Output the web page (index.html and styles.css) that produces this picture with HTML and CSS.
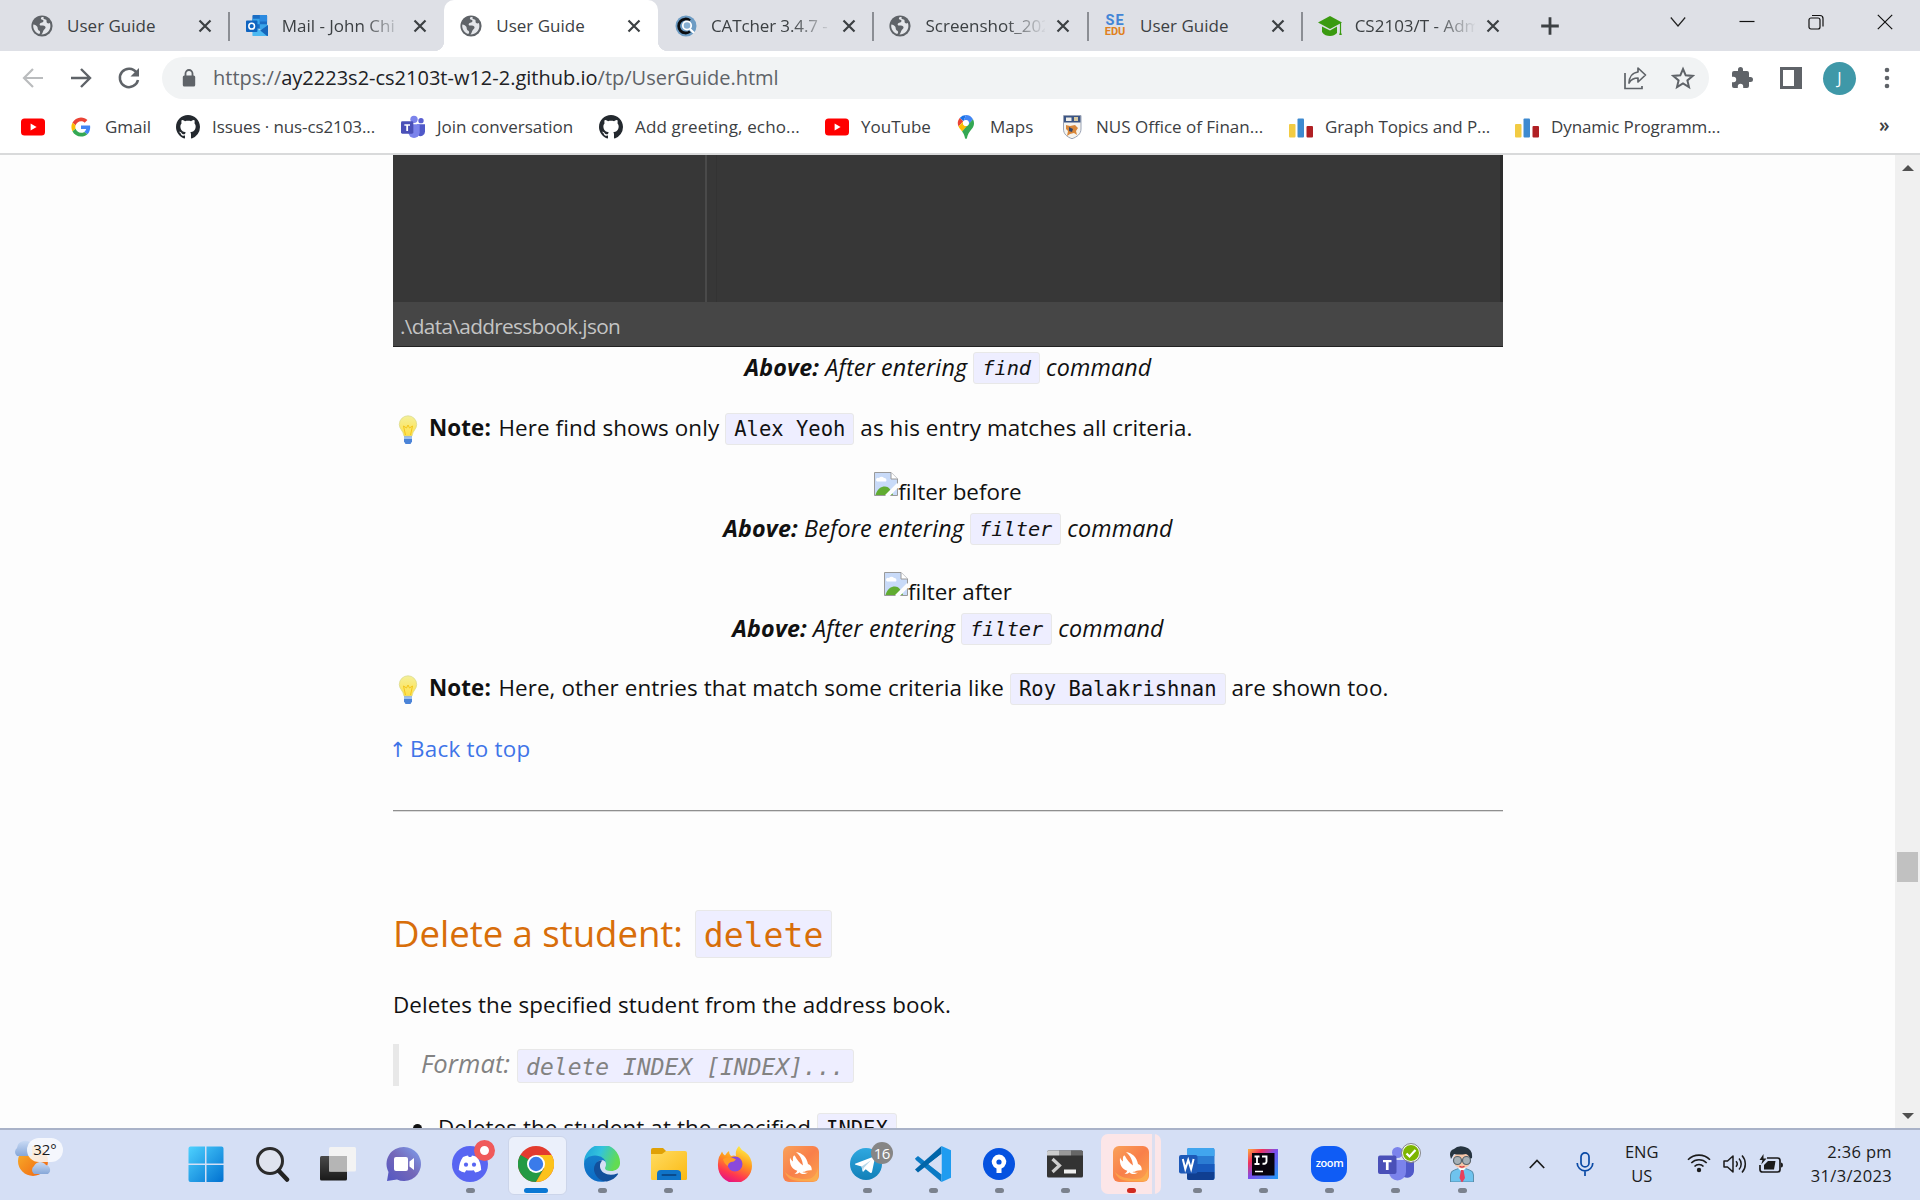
FILE: index.html
```html
<!DOCTYPE html>
<html lang="en">
<head>
<meta charset="utf-8">
<title>User Guide</title>
<link rel="stylesheet" href="styles.css">
</head>
<body>
<svg class="defs" width="0" height="0">
  <defs>
    <linearGradient id="gWin" gradientUnits="userSpaceOnUse" x1="0" y1="0" x2="36" y2="36"><stop offset="0" stop-color="#4fd3ff"/><stop offset="1" stop-color="#0070d0"/></linearGradient>
    <linearGradient id="gDark" x1="0" y1="0" x2="0" y2="1"><stop offset="0" stop-color="#4a4a4a"/><stop offset="1" stop-color="#191919"/></linearGradient>
    <linearGradient id="gChat" x1="0" y1="1" x2="1" y2="0"><stop offset="0" stop-color="#5256c4"/><stop offset=".5" stop-color="#7467b8"/><stop offset="1" stop-color="#7fa2f0"/></linearGradient>
    <linearGradient id="gEdge" x1="0" y1="0" x2="1" y2=".3"><stop offset="0" stop-color="#1c9fdc"/><stop offset=".5" stop-color="#33c3dc"/><stop offset="1" stop-color="#62dc52"/></linearGradient>
    <linearGradient id="gEdge2" x1="0" y1="0" x2="0" y2="1"><stop offset="0" stop-color="#1580cc"/><stop offset="1" stop-color="#0c6ac4"/></linearGradient>
    <linearGradient id="gFold" x1="0" y1="0" x2="1" y2="1"><stop offset="0" stop-color="#ffdc62"/><stop offset="1" stop-color="#fbb912"/></linearGradient>
    <linearGradient id="gFox" x1=".7" y1="0" x2=".3" y2="1"><stop offset="0" stop-color="#fff04a"/><stop offset=".4" stop-color="#ff9a1c"/><stop offset=".75" stop-color="#ff3750"/><stop offset="1" stop-color="#e0108a"/></linearGradient>
    <linearGradient id="gSwift" x1="0" y1="0" x2="1" y2="1"><stop offset="0" stop-color="#f9a25a"/><stop offset=".5" stop-color="#f97f4a"/><stop offset="1" stop-color="#fba34f"/></linearGradient>
    <linearGradient id="gTele" x1="0" y1="0" x2="0" y2="1"><stop offset="0" stop-color="#2fa8e0"/><stop offset="1" stop-color="#1280b8"/></linearGradient>
    <linearGradient id="gSun" x1="0" y1="0" x2="1" y2="1"><stop offset="0" stop-color="#f8b52c"/><stop offset="1" stop-color="#f06010"/></linearGradient>
    <linearGradient id="gCloud" x1="0" y1="0" x2="0" y2="1"><stop offset="0" stop-color="#c9daf4"/><stop offset="1" stop-color="#86a7d8"/></linearGradient>
    <linearGradient id="gIJ" x1="0" y1="0" x2="1" y2="1"><stop offset="0" stop-color="#ffb13b"/><stop offset=".25" stop-color="#f0315c"/><stop offset=".5" stop-color="#7a4ff0"/><stop offset="1" stop-color="#1e9cf5"/></linearGradient>
    <linearGradient id="gBulb" x1="0" y1="0" x2="0" y2="1"><stop offset="0" stop-color="#f4f09a"/><stop offset="1" stop-color="#ffe04a"/></linearGradient>
    <symbol id="globe" viewBox="0 0 22 22"><circle cx="11" cy="11" r="10.600" fill="#5f6368"/><path d="M10.500 2.200c-1.200 1-.4 2.400.8 2.500 1.200.2 1.600 1.200.7 2.200-1 1-2.800.6-3.300 2-.3 1 .5 1.600 1.800 1.600 2 0 3.600.2 4 1.600.4 1.500-1.200 2.200-1.900 3.200-.7 1.200-.8 3-2.200 4.100 4.700.3 9-3.700 9-8.400 0-1-.2-2-.5-2.900-.9.600-2.300.5-3-.3-.7-.9.100-2-.7-3-.8-.8-2.200-.2-2.700-1.300-.2-.5 0-1 .3-1.500-.8-.2-1.600-.1-2.300.2zM2.300 9.500c1.800.2 3.300 1 4 2.300.6 1.100.3 2.300 1 3.200.6.700 1.700.8 1.800 2 .1.700-.3 1.400-.8 1.900C4.600 17.900 1.600 14 2.300 9.500z" fill="#e4e6ea"/></symbol>
    <symbol id="close" viewBox="0 0 14 14"><path d="M1.500 1.500l11 11M12.500 1.500l-11 11" stroke="#3c4043" stroke-width="2.200"/></symbol>
    <symbol id="github" viewBox="0 0 16 16"><path fill="#24292f" d="M8 0C3.580 0 0 3.580 0 8c0 3.540 2.290 6.530 5.470 7.590.4.070.55-.17.55-.38 0-.19-.01-.82-.01-1.490-2.010.37-2.530-.49-2.690-.94-.09-.23-.48-.94-.82-1.130-.28-.15-.68-.52-.01-.53.63-.01 1.080.58 1.230.82.72 1.210 1.870.87 2.330.66.07-.52.28-.87.51-1.070-1.780-.2-3.640-.89-3.640-3.950 0-.87.31-1.590.82-2.150-.08-.2-.36-1.020.08-2.120 0 0 .67-.21 2.200.82.64-.18 1.320-.27 2-.27s1.360.09 2 .27c1.530-1.040 2.200-.82 2.200-.82.44 1.100.16 1.920.08 2.120.51.56.82 1.270.82 2.150 0 3.070-1.870 3.750-3.650 3.950.29.25.54.73.54 1.480 0 1.070-.01 1.930-.01 2.200 0 .21.15.46.55.38A8.010 8.010 0 0 0 16 8c0-4.420-3.580-8-8-8z"/></symbol>
    <symbol id="youtube" viewBox="0 0 24 24"><rect x="0" y="3.500" width="24" height="17" rx="3.500" fill="#f00"/><path d="M9.600 8.500v7l6-3.500z" fill="#fff"/></symbol>
    <symbol id="bars" viewBox="0 0 24 24"><rect x="0" y="9" width="6.500" height="13.500" rx="1" fill="#f2cb43"/><rect x="8.500" y="3.500" width="6.500" height="19" rx="1" fill="#3e8ad0"/><rect x="17.500" y="11" width="6.500" height="11.500" rx="1" fill="#b02024"/></symbol>
    <symbol id="teams" viewBox="0 0 36 36"><circle cx="30" cy="8.500" r="4" fill="#5a5fd0"/><circle cx="19.500" cy="6.500" r="5.500" fill="#7b83eb"/><path d="M24 14h12v11a7 7 0 0 1-10 6z" fill="#5059c9"/><path d="M11 14h17v12a8.500 8.500 0 0 1-17 0z" fill="#7b83eb"/><rect x="0" y="9.500" width="18.500" height="18.500" rx="2" fill="#4a50b8"/><path d="M5 14h8.500v2.300h-2.900V24H7.900v-7.700H5z" fill="#fff"/></symbol>
    <symbol id="broken" viewBox="0 0 24 24"><path d="M.5.500h16.500l6.500 6.500v16.500H.5z" fill="#c8daf8" stroke="#9a9a9a"/><path d="M17 .5v6.500h6.500" fill="#fff" stroke="#9a9a9a"/><path d="M3 9.500a2 2 0 0 1 2-3.500 3 3 0 0 1 5 0A2.200 2.200 0 0 1 12 9.500z" fill="#fff"/><path d="M1.500 23C3 17 7 14.500 11 14.500c3.500 0 6 3 8 8.500z" fill="#61ac32"/><path d="M12.500 24.500l12-12" stroke="#fdfdfd" stroke-width="4"/></symbol>
    <symbol id="bulb" viewBox="0 0 20 30"><path d="M10 .8a8.600 8.600 0 0 0-8.700 8.700c0 4.500 3.900 6 4.700 11.500h8c.8-5.500 4.700-7 4.700-11.500A8.600 8.600 0 0 0 10 .8z" fill="url(#gBulb)" stroke="#d8d888" stroke-width=".7"/><path d="M7.500 20L5.500 11l3 2 1.500-3 1.500 3 3-2-2 9" fill="none" stroke="#f3c51c" stroke-width="1"/><path d="M6 21.500h8v5L12.500 29h-5L6 26.500z" fill="#4b84d8"/><path d="M6 22h8v2H6z" fill="#9dc0f0"/></symbol>
    <symbol id="swift" viewBox="0 0 36 36"><rect width="36" height="36" rx="6" fill="url(#gSwift)"/><path d="M2 26C4 33 10 35 18 35h12q5 0 5-5v-8c-2 8-6 11-12 11C14 33 7 31 2 26z" fill="#fcb84f" opacity=".6"/><path d="M13 6c6 .8 11 5.500 12 12 3 1 4 3.500 3.700 6.200-2-.2-3.700 0-5 .6-2 1-3 1.200-4.700 1.100 2 .9 4 .9 6 .5-4 2.600-7 1.600-8.800-.2-.8 1.300-2 1.800-4.700 1.300 1.800-.7 2.500-1.500 2.700-2.700C9 23.300 6.200 18.500 7 11.500c1 2.200 1.800 3 3 4C9.600 11.500 10.300 8.500 12 10c2 4 4.500 7 8 9.500C19.500 14.500 17.500 9.500 13 6z" fill="#fff"/></symbol>
  </defs>
</svg>

<header class="chrome">
  <div class="tabs">
    <div class="tab"><svg class="fav"><use href="#globe"/></svg><span class="title">User Guide</span><svg class="x"><use href="#close"/></svg></div>
    <div class="tab sep"><svg class="fav" viewBox="0 0 24 24"><rect x="7" y="0" width="16" height="15" rx="1" fill="#1a6dc4"/><path d="M7 4h8v6H7zM15 10h8v6h-8z" fill="#3aa5ea"/><path d="M15 0h7q1 0 1 1v6h-8z" fill="#2b8ae0"/><path d="M7 11l8.500 6L24 11v11q0 1-1 1H8q-1 0-1-1z" fill="#4cb9f2"/><path d="M24 11v11q0 1-1 1L15.500 17z" fill="#1666bb"/><rect y="6" width="12.500" height="12.500" rx="1" fill="#0f64c0"/><circle cx="6.200" cy="12.200" r="3.100" fill="none" stroke="#fff" stroke-width="1.700"/></svg><span class="title fade">Mail - John Chi</span><svg class="x"><use href="#close"/></svg></div>
    <div class="tab active"><svg class="fav"><use href="#globe"/></svg><span class="title">User Guide</span><svg class="x"><use href="#close"/></svg></div>
    <div class="tab"><svg class="fav" viewBox="0 0 22 22"><circle cx="11" cy="11" r="10.500" fill="#6d9cc4"/><path d="M15 5.500A7 7 0 1 0 15 16.500" fill="none" stroke="#0b0d10" stroke-width="2.800"/><circle cx="12" cy="10.500" r="4.200" fill="#86aed0" stroke="#fff" stroke-width="1.800"/><path d="M15 14l4 4" stroke="#fff" stroke-width="2.200"/></svg><span class="title fade tight">CATcher 3.4.7 -</span><svg class="x"><use href="#close"/></svg></div>
    <div class="tab sep"><svg class="fav"><use href="#globe"/></svg><span class="title fade">Screenshot_202</span><svg class="x"><use href="#close"/></svg></div>
    <div class="tab sep"><span class="fav seedu"><b>SE</b><i>EDU</i></span><span class="title">User Guide</span><svg class="x"><use href="#close"/></svg></div>
    <div class="tab sep"><svg class="fav" viewBox="0 0 24 22"><path d="M12 1L0 7.500 12 14l12-6.500z" fill="#3a9a10"/><path d="M4 11.500V17c2 3 5 4 8 4s5-1 7-3v-6.500l-7 4z" fill="#3a9a10"/><path d="M22.500 8v9" stroke="#3a9a10" stroke-width="1.200"/><path d="M22.500 15l1.300 5h-2.600z" fill="#3a9a10"/></svg><span class="title fade">CS2103/T - Adm</span><svg class="x"><use href="#close"/></svg></div>
    <div class="newtab"><svg width="20" height="20" viewBox="0 0 20 20"><path d="M10 1.200v17.600M1.200 10h17.600" stroke="#3c4043" stroke-width="2.800"/></svg></div>
    <div class="winctl">
      <svg viewBox="0 0 16 16"><path d="M.8 3.500L8 12l7.200-8.500" fill="none" stroke="#222" stroke-width="1.200"/></svg>
      <svg viewBox="0 0 16 16"><path d="M.5 7.500h15" stroke="#111" stroke-width="1.200"/></svg>
      <svg viewBox="0 0 16 16"><rect x="1" y="4" width="11" height="11" rx="2" fill="none" stroke="#111" stroke-width="1.200"/><path d="M4 1.500h8q3 0 3 3v8" fill="none" stroke="#111" stroke-width="1.200"/></svg>
      <svg viewBox="0 0 16 16"><path d="M.8.800l14.400 14.400M15.200.800L.8 15.200" stroke="#111" stroke-width="1.200"/></svg>
    </div>
  </div>
  <div class="toolbar">
    <svg class="nav" viewBox="0 0 24 24"><path d="M22 12H4M12 3l-9 9 9 9" fill="none" stroke="#babcbe" stroke-width="2.200"/></svg>
    <svg class="nav" viewBox="0 0 24 24"><path d="M2 12h18M12 3l9 9-9 9" fill="none" stroke="#5f6368" stroke-width="2.400"/></svg>
    <svg class="nav" viewBox="0 0 24 24"><path d="M19.500 6.500A9.200 9.200 0 1 0 21 14" fill="none" stroke="#5f6368" stroke-width="2.500"/><path d="M22 2v8.500h-8.500z" fill="#5f6368"/></svg>
    <div class="omnibox">
      <svg width="14" height="18" viewBox="0 0 14 18"><rect x=".8" y="6.500" width="12.400" height="11" rx="1.500" fill="#5f6368"/><path d="M3.500 7V4.500a3.500 3.500 0 0 1 7 0V7" fill="none" stroke="#5f6368" stroke-width="1.800"/></svg>
      <span class="url">https://<b>ay2223s2-cs2103t-w12-2.github.io</b>/tp/UserGuide.html</span>
      <svg class="share" viewBox="0 0 24 24"><path d="M2 7v15.500h17V20" fill="none" stroke="#5f6368" stroke-width="1.700"/><path d="M15 2l7.500 7-7.500 7v-4c-4 0-7 1.500-9 5 .3-6 3.500-10.500 9-11z" fill="none" stroke="#5f6368" stroke-width="1.700" stroke-linejoin="round"/></svg>
      <svg class="star" viewBox="0 0 24 24"><path d="M12 3l2.700 6.300 6.900.6-5.200 4.500 1.600 6.700-6-3.600-6 3.600 1.600-6.700L2.400 9.900l6.900-.6z" fill="none" stroke="#5f6368" stroke-width="2"/></svg>
    </div>
    <svg class="tool ext" viewBox="0 0 24 24"><path d="M20.500 11H19V7a2 2 0 0 0-2-2h-4V3.500a2.500 2.500 0 0 0-5 0V5H4a2 2 0 0 0-2 2v3.800h1.500a2.700 2.700 0 0 1 0 5.400H2V20a2 2 0 0 0 2 2h3.800v-1.500a2.700 2.700 0 0 1 5.400 0V22H17a2 2 0 0 0 2-2v-4h1.500a2.500 2.500 0 0 0 0-5z" fill="#5f6368"/></svg>
    <svg class="tool side" viewBox="0 0 22 22"><path d="M0 0h22v22H0zM3 3v16h11V3z" fill="#5f6368" fill-rule="evenodd"/></svg>
    <div class="avatar">J</div>
    <svg class="tool dots" viewBox="0 0 6 22"><circle cx="3" cy="3" r="2.300" fill="#5f6368"/><circle cx="3" cy="11" r="2.300" fill="#5f6368"/><circle cx="3" cy="19" r="2.300" fill="#5f6368"/></svg>
  </div>
  <div class="bookmarks">
    <div class="bm"><svg><use href="#youtube"/></svg></div>
    <div class="bm"><svg viewBox="-6 -6 60 60"><path fill="#EA4335" d="M24 9.500c3.540 0 6.710 1.220 9.210 3.600l6.850-6.850C35.900 2.380 30.470 0 24 0 14.620 0 6.510 5.380 2.560 13.220l7.980 6.190C12.430 13.720 17.740 9.500 24 9.500z"/><path fill="#4285F4" d="M46.980 24.550c0-1.570-.15-3.090-.38-4.550H24v9.020h12.940c-.58 2.960-2.260 5.480-4.780 7.180l7.730 6c4.510-4.180 7.090-10.360 7.090-17.650z"/><path fill="#FBBC05" d="M10.530 28.590A14.500 14.500 0 0 1 9.770 24c0-1.600.27-3.140.76-4.590l-7.980-6.190A23.900 23.900 0 0 0 0 24c0 3.880.92 7.540 2.560 10.780z"/><path fill="#34A853" d="M24 48c6.480 0 11.930-2.130 15.890-5.810l-7.730-6c-2.150 1.450-4.920 2.300-8.160 2.300-6.260 0-11.570-4.220-13.470-9.910l-7.980 6.190C6.510 42.620 14.620 48 24 48z"/></svg><span>Gmail</span></div>
    <div class="bm"><svg><use href="#github"/></svg><span class="tight">Issues · nus-cs2103...</span></div>
    <div class="bm"><svg><use href="#teams"/></svg><span>Join conversation</span></div>
    <div class="bm"><svg><use href="#github"/></svg><span class="loose">Add greeting, echo...</span></div>
    <div class="bm"><svg><use href="#youtube"/></svg><span>YouTube</span></div>
    <div class="bm"><svg viewBox="0 0 24 24"><path d="M12 0a8.200 8.200 0 0 0-6.300 3L9.500 6.200z" fill="#1a73e8"/><path d="M5.700 3A8.200 8.200 0 0 0 4.500 11.500L9.300 6.200z" fill="#ea4335"/><path d="M12 0a8.200 8.200 0 0 1 7 4.200L14.500 9.800A3.200 3.200 0 0 0 9.600 6z" fill="#4285f4"/><path d="M4.500 11.500c.8 1.700 2.200 3 3.600 5L14.500 10A3.200 3.200 0 0 1 9.300 6.400z" fill="#fbbc04"/><path d="M19 4.200c2 4 .8 7.300-1.500 10C15 17.300 13.500 19.500 13 23q-1 2-2 0c-.5-2.500-1.400-4.500-2.900-6.500z" fill="#34a853"/><circle cx="12" cy="8" r="2.900" fill="#fff"/></svg><span>Maps</span></div>
    <div class="bm"><svg viewBox="0 0 24 24"><path d="M3.500.500h17.500V14c0 5-4 8-9 9.700C7 22 3.500 19 3.500 14z" fill="#f6f4ee" stroke="#9aa3b5"/><path d="M4 1h16.500v6.500H4z" fill="#3b5584"/><path d="M6 2.500h5.500v3.500H6z" fill="#f0eee8"/><path d="M14 2h4v4h-4z" fill="#d8c9a0"/><path d="M6 10l4 1 5-1 3 3-2 3 1 4-3-2-4 1-3 2 1-5-2-2z" fill="#d8873a"/><path d="M9 12l4 2-1 3-3-1z" fill="#33466b"/></svg><span>NUS Office of Finan...</span></div>
    <div class="bm"><svg><use href="#bars"/></svg><span class="tight">Graph Topics and P...</span></div>
    <div class="bm"><svg><use href="#bars"/></svg><span class="tight">Dynamic Programm...</span></div>
    <div class="more">»</div>
  </div>
</header>

<div class="view">
  <main class="page">
    <div class="shot"><div class="panes"><div class="left"></div><div class="right"></div></div><div class="status">.\data\addressbook.json</div></div>
    <p class="cap c1"><span><b>Above:</b> After entering</span> <code>find</code> <span>command</span></p>
    <p class="note"><svg class="bulb"><use href="#bulb"/></svg><b>Note:</b> <span>Here find shows only</span> <code>Alex Yeoh</code> <span>as his entry matches all criteria.</span></p>
    <p class="alt"><svg class="broken"><use href="#broken"/></svg><span>filter before</span></p>
    <p class="cap"><span><b>Above:</b> Before entering</span> <code>filter</code> <span>command</span></p>
    <p class="alt"><svg class="broken"><use href="#broken"/></svg><span>filter after</span></p>
    <p class="cap"><span><b>Above:</b> After entering</span> <code>filter</code> <span>command</span></p>
    <p class="note"><svg class="bulb"><use href="#bulb"/></svg><b>Note:</b> <span>Here, other entries that match some criteria like</span> <code>Roy Balakrishnan</code> <span>are shown too.</span></p>
    <p class="back"><a><span class="arrow">↑</span> Back to top</a></p>
    <hr>
    <h2><span>Delete a student:</span> <code>delete</code></h2>
    <p class="desc">Deletes the specified student from the address book.</p>
    <blockquote><span>Format:</span> <code>delete INDEX [INDEX]...</code></blockquote>
    <ul><li><span>Deletes the student at the specified</span> <code>INDEX</code></li></ul>
  </main>
  <div class="scroll"><svg viewBox="0 0 12 6"><path d="M0 6l6-6 6 6z" fill="#505050"/></svg><div class="thumb"></div><svg viewBox="0 0 12 6"><path d="M0 0l6 6 6-6z" fill="#505050"/></svg></div>
</div>

<footer class="taskbar">
  <div class="weather">
    <svg width="40" height="42" viewBox="0 0 40 42"><circle cx="18" cy="26" r="15" fill="url(#gSun)"/><path d="M2 21a5 5 0 0 1 0-8 8 8 0 0 1 15-3v11z" fill="url(#gCloud)"/><path d="M19 39a5 5 0 0 1 0-8 7 7 0 0 1 12-1 5 5 0 0 1 2 9z" fill="url(#gCloud)"/></svg>
    <span class="temp">32°</span>
  </div>
  <div class="apps">
    <div class="app"><svg viewBox="0 0 36 36"><path d="M.5 2.500q0-2 2-2H17v17H.5zM18.500.500h15q2 0 2 2v15h-17zM.5 19H17v17H2.500q-2 0-2-2zM18.500 19h17v15q0 2-2 2h-15z" fill="url(#gWin)"/></svg></div>
    <div class="app"><svg viewBox="0 0 36 36"><circle cx="16" cy="15" r="12.500" fill="#dfe3ee" stroke="#2b2b2b" stroke-width="3"/><path d="M25 25l8 8.500" stroke="#222" stroke-width="4.500" stroke-linecap="round"/></svg></div>
    <div class="app"><svg viewBox="0 0 36 36"><rect x="0" y="10" width="27" height="24.500" rx="1.500" fill="url(#gDark)"/><rect x="9" y="1" width="27" height="24.500" rx="1.500" fill="#f3f3f3"/><rect x="9" y="10" width="18" height="15.500" fill="#b5b5b5"/></svg></div>
    <div class="app"><svg viewBox="0 0 36 36"><path d="M18 1a17 17 0 1 1-7 32.500L1 35l1.500-9A17 17 0 0 1 18 1z" fill="url(#gChat)"/><rect x="8" y="11" width="14" height="14" rx="2" fill="#fff"/><path d="M23.500 15.500l4.500-3.500v12l-4.500-3.500z" fill="#fff"/></svg></div>
    <div class="app run"><svg viewBox="0 0 36 36"><circle cx="18" cy="18" r="18" fill="#5865f2"/><path d="M11 11q3-1.300 5-1.500l.8 1.500h2.400l.8-1.500q2 .2 5 1.500 4 5.500 4.200 13-3 2.300-6 2.500l-1.400-2.300q-3.800.7-7.600 0L12.800 26.500q-3-.2-6-2.500Q7 16.500 11 11z" fill="#fff"/><circle cx="14" cy="18.700" r="2.100" fill="#5865f2"/><circle cx="22" cy="18.700" r="2.100" fill="#5865f2"/></svg><span class="badge rec"></span></div>
    <div class="app run focus"><svg viewBox="0 0 36 36"><circle cx="18" cy="18" r="18" fill="#e33b2e"/><path d="M2.400 9A18 18 0 0 0 18 36l8-14-8-4z" fill="#249a45"/><path d="M2.400 9l8.200 13.500L18 18z" fill="#249a45"/><path d="M18 36A18 18 0 0 0 33.600 9H18l8 13.500z" fill="#fcc21b"/><circle cx="18" cy="18" r="9" fill="#fff"/><circle cx="18" cy="18" r="7.200" fill="#3a7bea"/></svg></div>
    <div class="app run"><svg viewBox="0 0 36 36"><path d="M0 17A18 18 0 0 1 36 16c.5 6-4 9-9 9-4 0-6-1.200-6-2.800 0-1.200 1-1.400 1-4.200 0-4-4-7-9-7C6 11 1 14 0 17z" fill="url(#gEdge)"/><path d="M0 18c0-5 5-8.500 11-8.500 6 0 11 3.500 11 8.500 0-3-3-4.500-5-4-4 1-6 5-5 10 1 6 6 9 9 11.500C9 37.500 0 29 0 18z" fill="url(#gEdge2)"/><path d="M16 14.200c-5 2-7 7-5.500 12 2 6 8 9.800 12.500 9.200 5-1 9-4 11-7.200.3-.6-.2-1-.8-.7C26 30.500 17 28 16 21c-.3-3 1-5.500 2.500-6.500z" fill="#12509c"/></svg></div>
    <div class="app run"><svg viewBox="0 0 36 36"><path d="M0 4q0-2 2-2h10l4 4-4 5H0z" fill="#e0a106"/><path d="M0 8h11l4-3h19q2 0 2 2v25.500q0 1.500-1.500 1.500h-33Q0 34 0 32.500z" fill="url(#gFold)"/><path d="M6 34v-6q0-4 4-4h16q4 0 4 4v6z" fill="#0f74c8"/><path d="M11.500 29h13" stroke="#0a4b8c" stroke-width="2" stroke-linecap="round"/></svg></div>
    <div class="app"><svg viewBox="0 0 36 36"><path d="M2 11Q4 8 5 5.500q1 3 3 4Q10 6 12 5q0 3 2 5 3-1 5 0-1-6 3-10 2 4 6 6 7 5 7 14A17 17 0 0 1 1 20q-.3-5 1-9z" fill="url(#gFox)"/><circle cx="18" cy="18" r="7.500" fill="#8a49dc"/><path d="M6 13q5-3 10-1l3 1.500q-2 2.500-5 2.500-3 1-3 4-4-2-5-7z" fill="#ff9c26"/></svg></div>
    <div class="app"><svg><use href="#swift"/></svg></div>
    <div class="app run"><svg viewBox="0 0 36 36"><circle cx="17" cy="18" r="16" fill="url(#gTele)"/><path d="M6 17.800L25 10.500q1.200-.3 1 1L23 26q-.4 1.500-1.800.7l-4.500-3.400-2.200 2.200q-.8.700-1-.5l-1-4.500-6-1.700q-1-.4-.5-1z" fill="#fff"/><path d="M12.500 20.500l9.500-6.300-7.300 7.800-.7 3z" fill="#b8d8ea"/></svg><span class="badge num">16</span></div>
    <div class="app run"><svg viewBox="0 0 36 36"><path d="M0 12.500L3 10l23.500 18.500V36L.8 14z" fill="#0a7ac4"/><path d="M0 23.500L26.500 0v8L3 26.500z" fill="#0065a9"/><path d="M26.500 0L36 4.300v27.400L26.500 36z" fill="#1f9cf0"/><path d="M26.500 8v20L13.500 18z" fill="#d5dff5"/></svg></div>
    <div class="app run"><svg viewBox="0 0 36 36"><circle cx="18" cy="18" r="16" fill="#0552e0"/><path d="M15.500 27V22.500A7.200 7.200 0 1 1 20.500 22.500V27z" fill="#fff"/><circle cx="18" cy="16" r="2.600" fill="#0552e0"/></svg></div>
    <div class="app run"><svg viewBox="0 0 36 36"><rect x="0" y="4.500" width="36" height="27" rx="1.500" fill="#333"/><path d="M0 9.500V6q0-1.500 1.500-1.500H12v5z" fill="#ccc"/><path d="M12 4.500h12v5H12z" fill="#999"/><path d="M24 4.500h10.500Q36 4.500 36 6v3.500H24z" fill="#666"/><path d="M5.500 13l7 6.500-7 6.500" fill="none" stroke="#ccc" stroke-width="3.200"/><path d="M17 25.500h12" stroke="#eee" stroke-width="4"/></svg></div>
    <div class="app run alert"><svg><use href="#swift"/></svg></div>
    <div class="app run"><svg viewBox="0 0 36 36"><rect x="8" y="2" width="27.500" height="32" rx="2" fill="#2b7cd3"/><path d="M8 10V4q0-2 2-2h23.500q2 0 2 2v6z" fill="#41a5ee"/><path d="M8 18h27.500v8H8z" fill="#185abd"/><path d="M8 26h27.500v6q0 2-2 2H10q-2 0-2-2z" fill="#103f91"/><rect x="0" y="9" width="18.500" height="18.500" rx="2" fill="#1d59b8"/><path d="M3.800 13l2.500 10L9.200 14l2.900 9 2.500-10" fill="none" stroke="#fff" stroke-width="2"/></svg></div>
    <div class="app run"><svg viewBox="0 0 36 36"><rect x="3" y="3" width="30" height="30" fill="url(#gIJ)"/><rect x="7" y="7" width="22.500" height="22.500" fill="#08030d"/><path d="M9.500 10.500h5M9.500 18h5M12 10.500V18M17 10.500h4.500v5q0 2.500-4 2.300" fill="none" stroke="#fff" stroke-width="1.900"/><path d="M10 25.500h8" stroke="#fff" stroke-width="1.500"/></svg></div>
    <div class="app run"><div class="zoomus">zoom</div></div>
    <div class="app run"><svg><use href="#teams"/></svg><span class="badge ok"><svg viewBox="0 0 14 14"><path d="M2.500 7.500l3 3 6-6.500" fill="none" stroke="#fff" stroke-width="2.200"/></svg></span></div>
    <div class="app run"><svg viewBox="0 0 36 36"><path d="M6.500 36v-7q0-4 4-5l4-1.500h7l4 1.500q4 1 4 5v7z" fill="#6fc3ee" stroke="#4b7d99" stroke-width=".8"/><path d="M14 22l4 4 4-4v-4h-8z" fill="#fff"/><path d="M17 24h2.500l1.500 8-2.500 4h-1L15.500 32z" fill="#e8405c"/><ellipse cx="18" cy="14" rx="9" ry="8.500" fill="#f6c6a8"/><path d="M7 13Q4 5 10 3q4-4 11-2 8 2 7 11l-2 1q-1-4-4-5-7 1-12 0z" fill="#26343f"/><circle cx="13.500" cy="14.500" r="4" fill="#a5b0b6" stroke="#56636d" stroke-width="1.200"/><circle cx="22.500" cy="14.500" r="4" fill="#a5b0b6" stroke="#56636d" stroke-width="1.200"/><path d="M15.500 20.300q2.500 1.500 5 0" stroke="#d8323f" stroke-width="1.200" fill="none"/></svg></div>
  </div>
  <div class="tray">
    <svg class="chev" viewBox="0 0 16 10"><path d="M.8 9L8 1.500 15.200 9" fill="none" stroke="#1b1b1b" stroke-width="1.700"/></svg>
    <svg class="mic" viewBox="0 0 18 24"><rect x="5" y=".9" width="8" height="14" rx="4" fill="none" stroke="#0b4aa5" stroke-width="1.700"/><path d="M1.200 11a7.800 7.800 0 0 0 15.600 0M9 19v5" fill="none" stroke="#0b4aa5" stroke-width="1.700"/></svg>
    <div class="lang">ENG<br>US</div>
    <svg class="wifi" viewBox="0 0 24 20"><circle cx="12" cy="16" r="2.200" fill="#1b1b1b"/><path d="M7.500 12.500a6.200 6.200 0 0 1 9 0M4.300 9a10.800 10.800 0 0 1 15.400 0M1 5.700a15.500 15.500 0 0 1 22 0" fill="none" stroke="#1b1b1b" stroke-width="1.600"/></svg>
    <svg class="spk" viewBox="0 0 24 20"><path d="M1 7h3.500L10 2v16l-5.500-5H1z" fill="none" stroke="#1b1b1b" stroke-width="1.500" stroke-linejoin="round"/><path d="M13 7.300a4 4 0 0 1 0 5.400M16 4.500a8 8 0 0 1 0 11M19 1.500a12.500 12.500 0 0 1 0 17" fill="none" stroke="#1b1b1b" stroke-width="1.500"/></svg>
    <svg class="bat" viewBox="0 0 24 20"><path d="M8 4h10.500q2.500 0 2.500 2.500v9q0 2.500-2.500 2.500h-15Q1 18 1 15.500V11" fill="none" stroke="#1b1b1b" stroke-width="1.700"/><path d="M22 8.500q2 0 2 2.500t-2 2.500z" fill="#1b1b1b"/><path d="M5 15.500V11l4-4h7.500l-1.500 8.500z" fill="#1b1b1b"/><path d="M4.500 0L.5 6h3L2.300 10.500 7.500 4.500h-3z" fill="#1b1b1b"/></svg>
    <div class="clock">2:36 pm<br>31/3/2023</div>
  </div>
</footer>
</body>
</html>
```
FILE: styles.css
```css
* { box-sizing: border-box; }
body { margin: 0; width: 1920px; height: 1200px; overflow: hidden; display: flex; flex-direction: column; background: #fdfdfd; font-family: "Open Sans", "Noto Sans", sans-serif; color: #111; }
svg { display: block; flex: none; }
.defs { position: absolute; }
.tight { letter-spacing: -.1px; }
.loose { letter-spacing: .15px; }

/* browser chrome */
.chrome { height: 155px; flex: none; background: #fff; border-bottom: 2px solid #d9dadb; font-size: 17px; color: #3c4043; }
.tabs { height: 51px; padding-left: 14.600px; display: flex; background: #dee0e6; }
.tab { width: 214.600px; flex: none; display: flex; align-items: center; position: relative; padding-left: 15.500px; }
.tab.sep::before { content: ""; position: absolute; left: -1px; top: 12px; width: 2px; height: 29px; background: #8b8e94; }
.tab.active { background: #fff; border-radius: 10px 10px 0 0; }
.tab.active::before, .tab.active::after { content: ""; position: absolute; bottom: 0; width: 10px; height: 10px; }
.tab.active::before { left: -10px; background: radial-gradient(circle at 0 0, transparent 10px, #fff 10.500px); }
.tab.active::after { right: -10px; background: radial-gradient(circle at 100% 0, transparent 10px, #fff 10.500px); }
.fav { width: 24px; height: 22px; margin-right: 13px; }
.title { width: 120px; white-space: nowrap; overflow: hidden; line-height: 26px; }
.fade { -webkit-mask-image: linear-gradient(90deg, #000 80px, transparent 122px); mask-image: linear-gradient(90deg, #000 80px, transparent 122px); }
.x { width: 16px; height: 14px; margin-left: 10px; }
.seedu { display: flex; flex-direction: column; align-items: center; justify-content: center; line-height: 11px; font-family: Roboto, sans-serif; flex: none; }
.seedu b { color: #4285d6; font-size: 14.500px; letter-spacing: 1px; }
.seedu i { color: #e08020; font-style: normal; font-weight: 700; font-size: 11px; }
.newtab { width: 66px; display: flex; align-items: center; justify-content: center; }
.winctl { margin-left: auto; display: flex; gap: 53px; padding: 14px 27px 0 0; }
.winctl svg { width: 16px; height: 16px; }
.toolbar { height: 54px; display: flex; align-items: center; padding-left: 21px; }
.nav { width: 24px; height: 24px; margin-right: 24px; }
.omnibox { width: 1547px; height: 42px; margin-left: -3px; border-radius: 21px; background: #f1f3f4; display: flex; align-items: center; padding-left: 20px; font-size: 20px; color: #5f6368; flex: none; }
.url { margin-left: 17px; line-height: 30px; white-space: nowrap; }
.url b { font-weight: 400; color: #202124; }
.share { width: 24px; height: 26px; margin-left: auto; }
.star { width: 24px; height: 26px; margin: 0 14px 0 24px; }
.ext { width: 24px; height: 26px; margin-left: 21px; }
.side { width: 22px; height: 22px; margin-left: 26px; }
.avatar { width: 33px; height: 33px; margin-left: 21px; border-radius: 50%; background: #3f98a8; color: #fff; font-size: 16px; display: flex; align-items: center; justify-content: center; flex: none; }
.dots { width: 6px; height: 22px; margin-left: 28px; }
.bookmarks { height: 48px; padding-left: 21px; display: grid; grid-template-columns: 48px 107px 225px 198px 226px 129px 106px 229px 226px 1fr 41px; align-items: center; white-space: nowrap; padding-bottom: 4px; }
.bm { display: flex; align-items: center; }
.bm svg { width: 24px; height: 24px; margin-right: 12px; }
.bm span { margin-bottom: 2px; }
.more { font-size: 19px; font-weight: 600; line-height: 24px; margin-bottom: 4px; }

/* document */
.view { flex: 1; min-height: 0; display: flex; overflow: hidden; }
.page { width: 1110px; margin-left: 393px; font-size: 22.400px; line-height: 36px; letter-spacing: .1px; white-space: nowrap; }
.page p { margin: 0; height: 36px; display: flex; align-items: center; }
.page code { font: 20.500px/31px "DejaVu Sans Mono", monospace; letter-spacing: 0; height: 32px; padding: 0 8px; margin: 1px 6px 0; border: 1px solid #e8e8e8; border-radius: 3px; background: #eef; }
.shot { height: 192px; display: flex; flex-direction: column; border-bottom: 1px solid #222; background: #373737; }
.panes { flex: 1; display: flex; }
.left { width: 314px; border-right: 2px solid #4a4a4a; }
.right { flex: 1; margin-left: 9px; border-left: 1px solid #333; border-right: 3px solid #2d2d2d; }
.status { height: 44px; padding: 3px 0 0 7px; background: #464646; color: #c4c4c4; display: flex; align-items: center; font-size: 20.800px; letter-spacing: -.67px; }
.page .cap { justify-content: center; font-size: 23.300px; font-style: italic; letter-spacing: .15px; }
.page .cap code { font-style: italic; font-size: 20.300px; }
.page .c1 { margin: 2px 0 25px; }
.bulb { width: 20px; height: 30px; margin: 3px 11px 0 5px; }
.note > span { margin-left: 7.500px; }
.note > code + span { margin-left: 0; }
.page .alt { justify-content: center; margin-top: 27px; height: 37px; letter-spacing: 0; }
.broken { width: 24px; height: 24px; margin-bottom: 15px; }
.page .cap + .note { margin-top: 24px; }
.page .c1 + .note { margin-top: 0; }
.page .back { margin-top: 25px; color: #3f74e8; letter-spacing: .25px; }
.arrow { display: inline-block; width: 11px; font-family: "DejaVu Sans", sans-serif; font-size: 21px; text-indent: -4px; }
hr { margin: 43px 0 0; border: 0; border-top: 1px solid #8f8f8f; border-bottom: 1px solid #dcdcdc; }
h2 { margin: 97px 0 0; height: 50px; font-weight: 400; font-size: 36.600px; line-height: 48px; letter-spacing: -.05px; color: #d86e0a; display: flex; align-items: center; }
h2 span { margin-bottom: 2px; }
.page h2 code { font-size: 33.100px; height: 48px; line-height: 49px; margin: 0 0 0 12px; }
.page .desc { margin-top: 28px; }
blockquote { margin: 21px 0 0; height: 42px; border-left: 6px solid #e8e8e8; padding-left: 22px; display: flex; align-items: center; font-size: 25.600px; font-style: italic; color: #828282; }
blockquote span { margin-bottom: 2px; }
.page blockquote code { font-size: 22.900px; height: 34px; line-height: 34px; font-style: italic; letter-spacing: .07px; margin-left: 7px; }
ul { margin: 24px 0 0; padding: 0; list-style: none; }
li { display: flex; align-items: center; }
li::before { content: ""; width: 9px; height: 9px; border-radius: 50%; background: #111; margin: 0 16px 0 20px; }
.scroll { width: 25px; margin-left: auto; background: #f0f0f0; display: flex; flex-direction: column; align-items: center; padding: 10px 0 9px; }
.scroll svg { width: 12px; height: 6px; }
.thumb { width: 21px; height: 30px; background: #c1c1c1; margin: 681px 0 auto; }

/* taskbar */
.taskbar { height: 72px; flex: none; background: #d5dff5; border-top: 2px solid #a9b2c8; display: flex; color: #1b1b1b; }
.weather { width: 172.800px; padding: 5px 0 0 15px; position: relative; }
.temp { position: absolute; left: 27px; top: 8px; width: 36px; height: 24px; border-radius: 12px; background: rgba(250,251,254,.85); font-size: 15px; line-height: 23px; text-align: center; }
.apps { display: flex; }
.app { width: 66.100px; padding-bottom: 2px; position: relative; display: flex; align-items: center; justify-content: center; }
.app > svg { width: 36px; height: 36px; z-index: 1; }
.run::after { content: ""; position: absolute; bottom: 7px; left: 29px; width: 9px; height: 5px; border-radius: 3px; background: #7b828e; }
.focus::before { content: ""; position: absolute; left: 5px; top: 6px; width: 57px; height: 57px; border-radius: 6px; background: #ebf0fb; border: 1px solid #ccd5ea; }
.focus::after { width: 24px; left: 21px; background: #0a78d4; }
.alert::before { content: ""; position: absolute; left: 3px; top: 4px; width: 60px; height: 60px; border-radius: 7px; background: linear-gradient(90deg, #fce6e8 51px, #dcdff0 51px 54px, #fce6e8 54px); }
.alert::after { background: #d02a20; }
.badge { position: absolute; z-index: 2; border-radius: 50%; display: flex; align-items: center; justify-content: center; }
.rec { width: 21px; height: 21px; left: 37px; top: 10px; background: #fff; border: 6px solid #f05a5a; }
.num { width: 22px; height: 22px; left: 37px; top: 12px; background: #868686; color: #fff; font-size: 15px; letter-spacing: -.5px; }
.ok { width: 18px; height: 18px; left: 40px; top: 14px; background: #7db500; border: 1px solid #fff; outline: 1px solid #888; }
.ok svg { width: 14px; height: 14px; }
.zoomus { width: 36px; height: 36px; border-radius: 13px; background: #0f5cf5; color: #fff; font: 600 11px/34px "Open Sans", sans-serif; text-align: center; letter-spacing: -.4px; }
.tray { flex: 1; display: flex; align-items: center; padding-bottom: 2px; font-size: 16.500px; line-height: 24px; }
.chev { width: 16px; height: 10px; margin-left: 34px; }
.mic { width: 18px; height: 24px; margin-left: 31px; }
.lang { width: 50px; margin-left: 23px; text-align: center; }
.wifi { width: 24px; height: 20px; margin-left: 20px; }
.spk { width: 24px; height: 20px; margin-left: 12px; }
.bat { width: 24px; height: 20px; margin-left: 12px; }
.clock { margin-left: auto; margin-right: 28px; text-align: right; letter-spacing: .35px; }
```
